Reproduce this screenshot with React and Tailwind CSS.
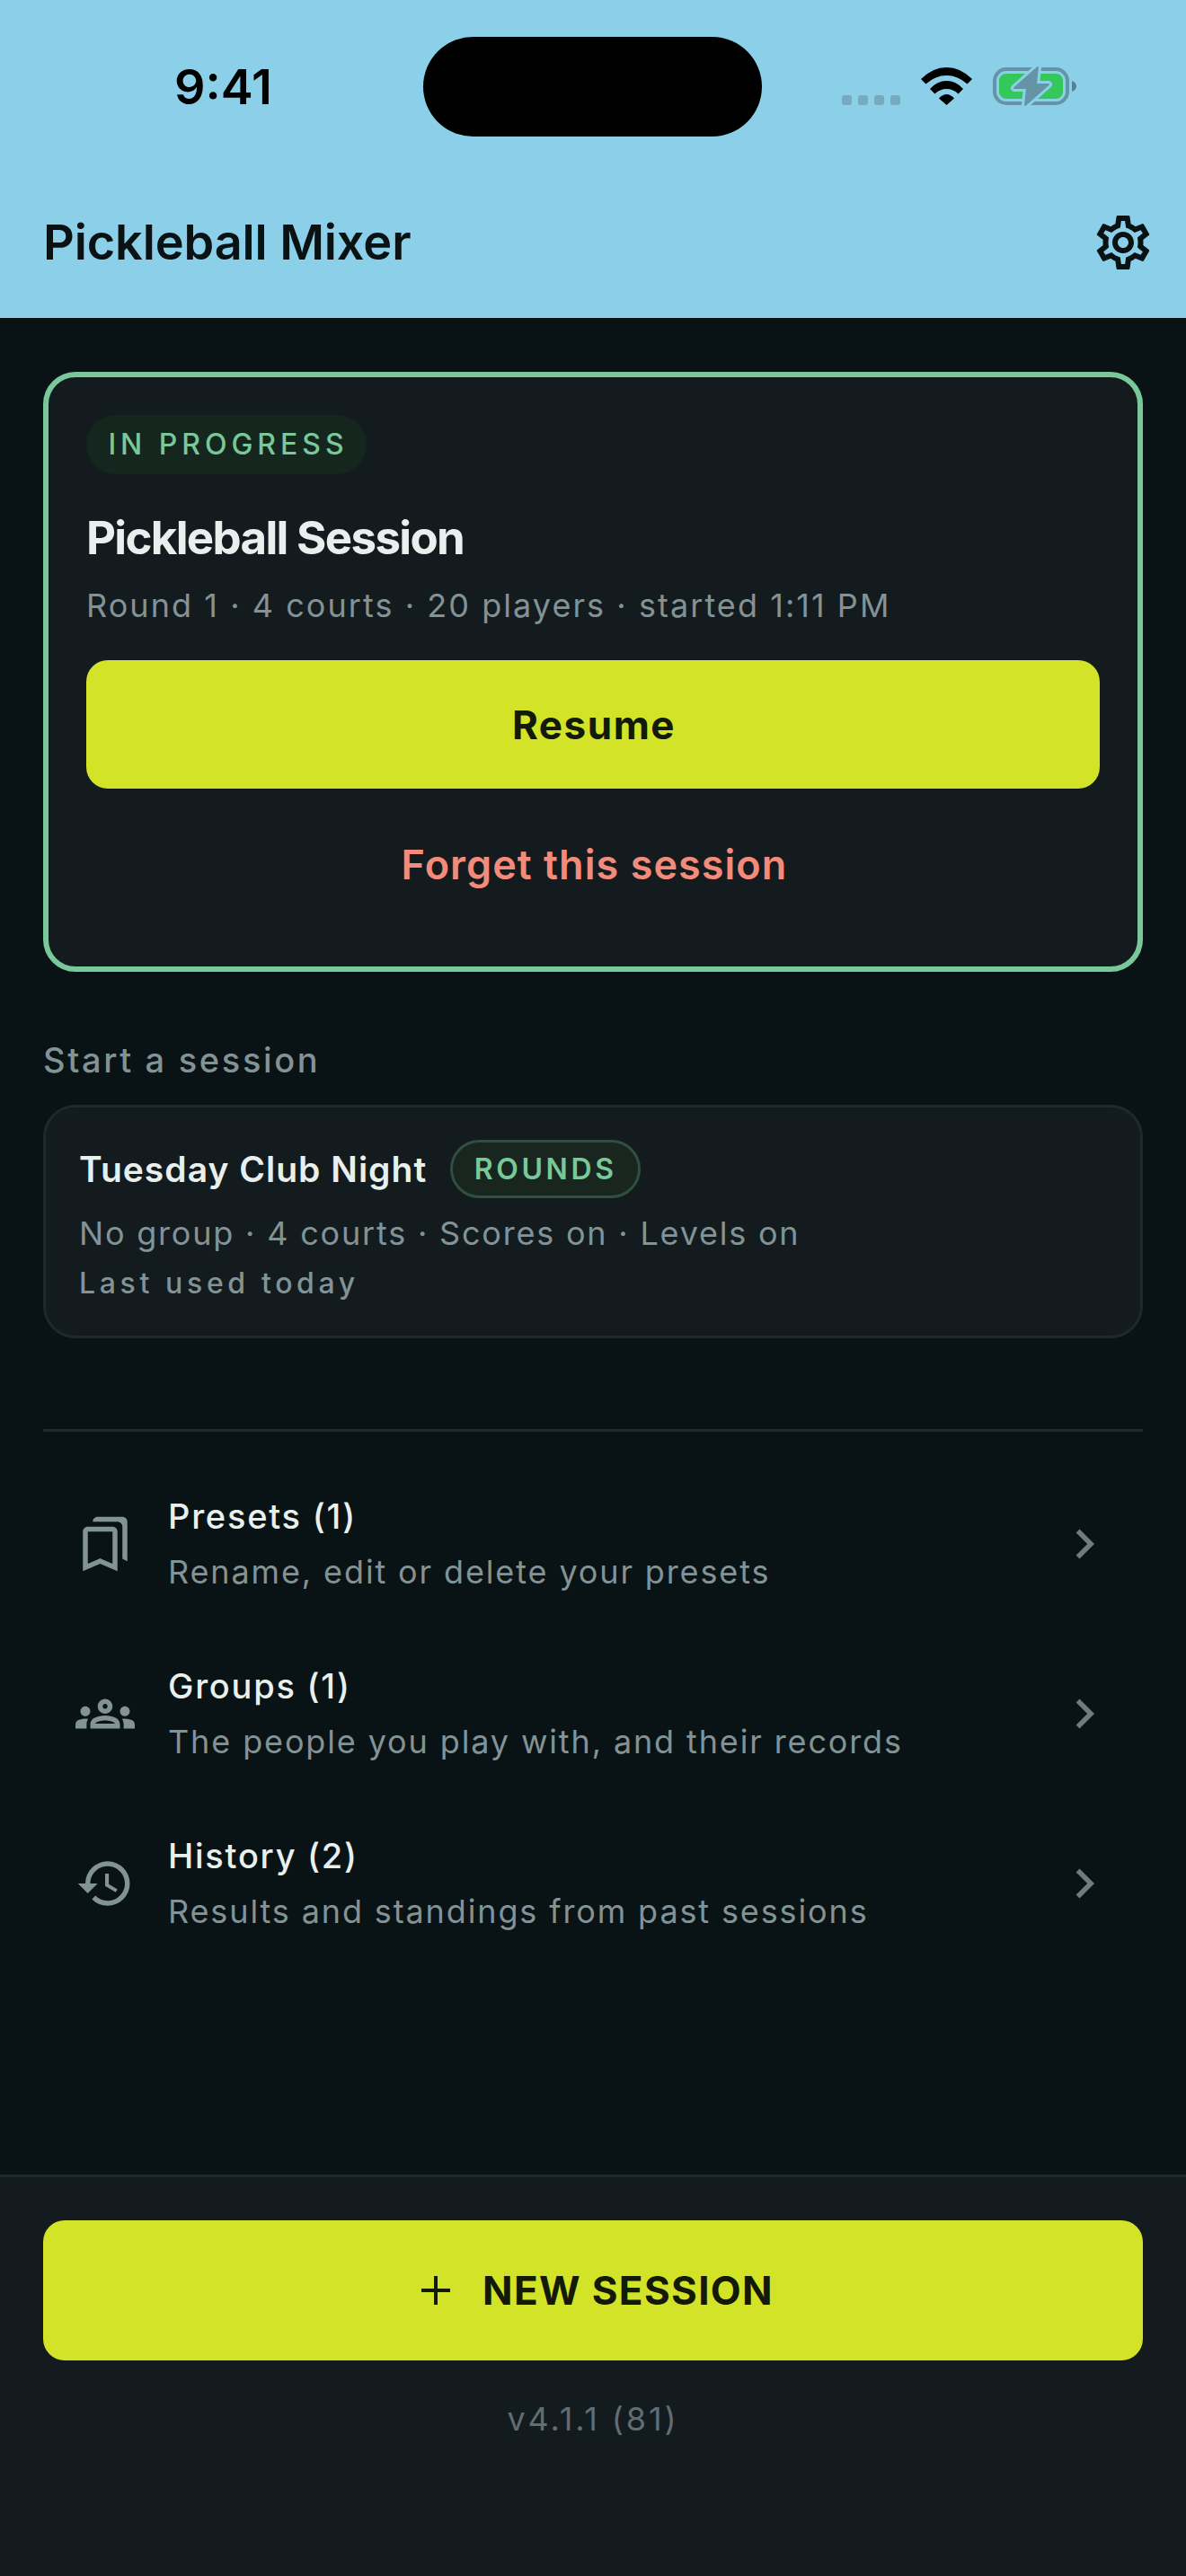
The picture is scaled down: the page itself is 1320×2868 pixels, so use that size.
import React from "react";
import { MdOutlineSettings, MdOutlineBookmarks, MdOutlineGroups, MdHistory, MdChevronRight } from "react-icons/md";

function Wifi() {
  return (
    <svg width="57" height="42" viewBox="0 0 57 42" fill="#000">
      <path d="M0 13 Q13 0 28.5 0 Q44 0 57 13 L51.5 18.5 Q41 9 28.5 9 Q16 9 5.5 18.5 Z" />
      <path d="M10 24 Q18 15 28.5 15 Q39 15 47 24 L41.5 29.5 Q36 24 28.5 24 Q21 24 15.5 29.5 Z" />
      <path d="M20 34.5 Q24 30 28.5 30 Q33 30 37 34.5 L28.5 42 Z" />
    </svg>
  );
}

function Battery() {
  return (
    <svg width="94" height="46" viewBox="0 0 94 46" fill="none">
      <rect x="2" y="4" width="81" height="38" rx="13" stroke="#6494a6" strokeWidth="4" />
      <rect x="7" y="9" width="71" height="28" rx="8" fill="#34c759" />
      <path d="M88 17 C91 18 93 20 93 23 C93 26 91 28 88 29 Z" fill="#56808f" />
      <path
        d="M50 2 L24 25 H38 L36 44 L62 21 H48 Z"
        fill="#6494a6"
        stroke="#8bd0e8"
        strokeWidth="8"
        strokeLinejoin="round"
        paintOrder="stroke"
      />
      <path d="M50 2 L24 25 H38 L36 44 L62 21 H48 Z" fill="#6494a6" stroke="#6494a6" strokeWidth="2" strokeLinejoin="round" />
    </svg>
  );
}

function StatusBar() {
  return (
    <div className="flex h-[186px] items-start">
      <div className="flex h-[152px] w-[471px] items-center pl-[194px] pt-[41px]">
        <span className="text-[54px] leading-none font-semibold text-black">9:41</span>
      </div>
      <div className="mt-[41px] h-[111px] w-[377px] rounded-full bg-black" />
      <div className="flex items-start pl-[89px] pt-[73px]">
        <div className="mt-[33px] flex gap-[7px]">
          {[0, 1, 2, 3].map((n) => (
            <div key={n} className="h-[11px] w-[11px] rounded-[3px] bg-[#74abbe]" />
          ))}
        </div>
        <div className="ml-[23px] mt-[2px]">
          <Wifi />
        </div>
        <div className="ml-[23px]">
          <Battery />
        </div>
      </div>
    </div>
  );
}

function MenuRow({ icon, title, subtitle }) {
  return (
    <div className="flex h-[189px] items-center pl-[34px] pr-[32px]">
      <div className="flex w-[70px] shrink-0 items-center justify-center text-[#829396]">{icon}</div>
      <div className="ml-[35px] flex-1">
        <div className="text-[38px] leading-[50px] font-medium tracking-[0.046em] text-[#e8f0ee]">{title}</div>
        <div className="mt-[12px] text-[36px] leading-[50px] tracking-[0.052em] text-[#829396]">{subtitle}</div>
      </div>
      <MdChevronRight className="text-[66px] text-[#6e7c82]" />
    </div>
  );
}

export default function App() {
  return (
    <div className="flex h-[2868px] w-[1320px] flex-col bg-[#091214] font-['Inter',sans-serif]">
      <header className="h-[354px] bg-[#8bd0e8]">
        <StatusBar />
        <div className="flex h-[168px] items-center justify-between pl-[48px] pr-[34px]">
          <h1 className="text-[54px] leading-none font-semibold tracking-[-0.002em] text-[#0a1214]">Pickleball Mixer</h1>
          <MdOutlineSettings className="text-[72px] text-[#0a1214]" />
        </div>
      </header>

      <main className="flex-1 px-[48px] pt-[60px]">
        <section className="h-[668px] rounded-[36px] border-[6px] border-[#78c89a] bg-[#141b1f] px-[42px] pt-[42px]">
          <div className="flex h-[66px] w-[312px] items-center justify-center rounded-full bg-[#15261e] pl-[4px]">
            <span className="text-[32px] leading-none font-medium tracking-[0.155em] text-[#78c89a]">IN PROGRESS</span>
          </div>
          <h2 className="mt-[40px] text-[51px] leading-[62px] font-bold tracking-[-0.033em] text-[#e8f0ee]">
            Pickleball Session
          </h2>
          <p className="mt-[22px] text-[36px] leading-[44px] tracking-[0.057em] text-[#829396]">
            Round 1 · 4 courts · 20 players · started 1:11 PM
          </p>
          <button className="mt-[39px] flex h-[143px] w-full items-center justify-center rounded-[24px] bg-[#d3e428] pl-[2px] text-[44px] font-bold tracking-[0.035em] text-[#141a08]">
            Resume
          </button>
          <div className="mt-[58px] pl-[3px] text-center text-[45px] leading-[54px] font-semibold tracking-[0.023em] text-[#f28b7a]">
            Forget this session
          </div>
        </section>

        <h3 className="mt-[75px] text-[38px] leading-[46px] font-medium tracking-[0.07em] text-[#829396]">
          Start a session
        </h3>
        <section className="mt-[27px] h-[260px] rounded-[36px] border-[3px] border-[#1f282c] bg-[#141b1f] pl-[37px] pt-[36px]">
          <div className="flex items-center">
            <span className="text-[39px] leading-none font-semibold tracking-[0.026em] text-[#e8f0ee]">Tuesday Club Night</span>
            <span className="ml-[26px] flex h-[65px] w-[212px] items-center justify-center rounded-full border-[3px] border-[#2f5040] bg-[#18261f] text-[32px] leading-none font-semibold tracking-[0.112em] text-[#78c89a]">
              ROUNDS
            </span>
          </div>
          <p className="mt-[16px] text-[36px] leading-[46px] tracking-[0.05em] text-[#829396]">
            No group · 4 courts · Scores on · Levels on
          </p>
          <p className="mt-[12px] text-[32px] leading-[42px] font-medium tracking-[0.145em] text-[#829396]">Last used today</p>
        </section>

        <div className="mt-[101px] h-[3px] bg-[#22292d]" />
        <div className="mt-[30px]">
          <MenuRow icon={<MdOutlineBookmarks className="text-[66px]" />} title="Presets (1)" subtitle="Rename, edit or delete your presets" />
          <MenuRow icon={<MdOutlineGroups className="text-[66px]" />} title="Groups (1)" subtitle="The people you play with, and their records" />
          <MenuRow icon={<MdHistory className="text-[66px]" />} title="History (2)" subtitle="Results and standings from past sessions" />
        </div>
      </main>

      <footer className="h-[447px] border-t-[3px] border-[#1e272b] bg-[#141b1f] px-[48px] pt-[48px]">
        <button className="flex h-[156px] w-full items-center justify-center rounded-[24px] bg-[#d3e428] pl-[10px] text-[44px] font-bold tracking-[0.03em] text-[#141a08]">
          <svg width="32" height="32" viewBox="0 0 32 32" stroke="#141a08" strokeWidth="4" className="mr-[36px]">
            <path d="M16 0V32M0 16H32" />
          </svg>
          NEW SESSION
        </button>
        <p className="mt-[43px] text-center text-[36px] leading-[44px] tracking-[0.08em] text-[#5f6e74]">v4.1.1 (81)</p>
      </footer>
    </div>
  );
}
